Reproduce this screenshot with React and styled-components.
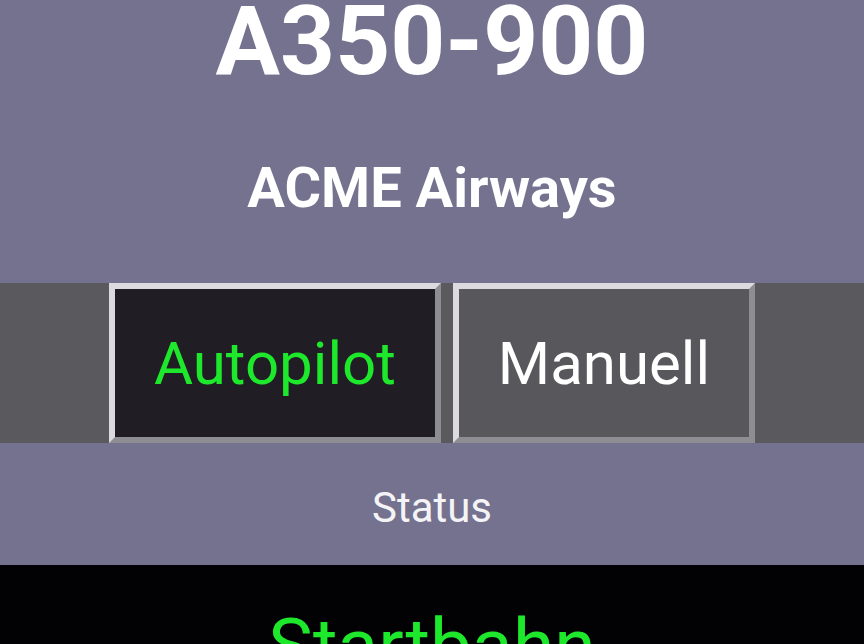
import React from "react";
import styled, { createGlobalStyle } from "styled-components";

const Global = createGlobalStyle`
  html, body { margin: 0; padding: 0; background: #000; }
  body { font-family: Roboto, "Liberation Sans", sans-serif; overflow: hidden; }
`;

const Page = styled.div`
  display: flex;
  flex-direction: column;
  width: 864px;
  height: 644px;
  overflow: hidden;
`;

const Header = styled.header`
  flex-shrink: 0;
  background: #74728f;
  height: 283px;
  display: flex;
  flex-direction: column;
  align-items: center;
  color: #ffffff;
`;

const Title = styled.h1`
  margin: -7px 0 0;
  font-size: 96px;
  line-height: 96px;
  font-weight: 700;
`;

const Airline = styled.h2`
  margin: 71px 0 0;
  font-size: 56px;
  line-height: 56px;
  font-weight: 700;
`;

const ModeBar = styled.div`
  flex-shrink: 0;
  background: #5a595e;
  height: 160px;
  display: flex;
  justify-content: center;
  gap: 12px;
`;

const ModeButton = styled.button`
  box-sizing: border-box;
  height: 160px;
  padding: 0 39px;
  display: flex;
  align-items: center;
  border-style: solid;
  border-width: 6px;
  border-color: #dcdadf #8f8d94 #8f8d94 #dcdadf;
  background: ${(p) => (p.$active ? "#201d24" : "#58575c")};
  color: ${(p) => (p.$active ? "#1ee82b" : "#ffffff")};
  font-family: Roboto, "Liberation Sans", sans-serif;
  font-size: 60px;
  font-weight: 400;
  cursor: pointer;
`;

const StatusBar = styled.div`
  flex-shrink: 0;
  background: #74728f;
  height: 122px;
  box-sizing: border-box;
  padding-top: 40px;
  text-align: center;
  color: #f4f4f6;
  font-size: 42px;
`;

const Runway = styled.div`
  flex-shrink: 0;
  height: 200px;
  background: #020104;
  padding-top: 36px;
  text-align: center;
  color: #1ee82b;
  font-size: 75px;
`;

export default function App() {
  return (
    <>
      <Global />
      <Page>
        <Header>
          <Title>A350-900</Title>
          <Airline>ACME Airways</Airline>
        </Header>
        <ModeBar>
          <ModeButton $active>Autopilot</ModeButton>
          <ModeButton>Manuell</ModeButton>
        </ModeBar>
        <StatusBar>Status</StatusBar>
        <Runway>Startbahn</Runway>
      </Page>
    </>
  );
}
